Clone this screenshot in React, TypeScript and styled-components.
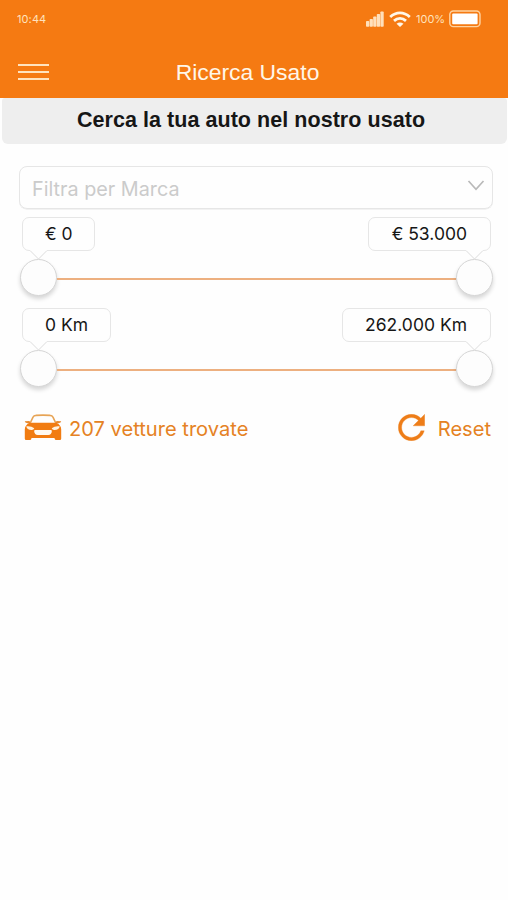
import React from "react";
import styled, { createGlobalStyle } from "styled-components";

const Global = createGlobalStyle`
  *, *::before, *::after { box-sizing: border-box; }
  html, body { margin: 0; padding: 0; background: #fefefe; }
  button { font: inherit; color: inherit; background: none; border: 0; padding: 0; margin: 0; }
  svg { display: block; flex: none; }
`;

const Screen = styled.div`
  display: flex;
  flex-direction: column;
  width: 508px;
  height: 900px;
  overflow: hidden;
  background: #fefefe;
  font-family: Inter, "Liberation Sans", sans-serif;
`;

const Header = styled.header`
  flex: none;
  height: 98px;
  background: #f57a12;
  color: #fff6e8;
`;

const StatusBar = styled.div`
  display: flex;
  align-items: center;
  justify-content: space-between;
  height: 38px;
  padding: 0 27px 0 17px;
`;

const Clock = styled.span`
  font-size: 11px;
  letter-spacing: 0.1px;
  color: #ffe2bd;
`;

const Indicators = styled.div`
  display: flex;
  align-items: center;
  gap: 5px;
`;

const Battery = styled.span`
  display: flex;
  align-items: center;
  justify-content: space-between;
  width: 65px;
  font-size: 11px;
  color: #ffe2bd;
`;

const NavBar = styled.div`
  display: grid;
  grid-template-columns: 60px 1fr 73px;
  align-items: center;
  height: 60px;
  padding-top: 7px;
`;

const MenuButton = styled.button`
  display: flex;
  flex-direction: column;
  gap: 5px;
  width: 31px;
  margin: 1px 0 0 18px;
`;

const MenuLine = styled.span`
  height: 2px;
  background: #ffe3be;
`;

const Title = styled.h1`
  margin: 0;
  text-align: center;
  font: 400 22.9px/26px "Liberation Sans", sans-serif;
`;

const Banner = styled.h2`
  flex: none;
  height: 46px;
  margin: 0 1px 0 2px;
  padding: 1px 7px 0 0;
  border-radius: 3px 3px 6px 6px;
  background: #eeeeee;
  color: #161616;
  text-align: center;
  font: 700 21.5px/43px "Liberation Sans", sans-serif;
  letter-spacing: 0.05px;
`;

const Filters = styled.main`
  display: flex;
  flex-direction: column;
  padding: 22px 14px 0 19px;
`;

const Select = styled.button`
  display: flex;
  align-items: center;
  justify-content: space-between;
  width: 474px;
  height: 43px;
  padding: 0 7px 0 12px;
  border: 1px solid #e6e6e6;
  border-radius: 8px;
  box-shadow: 0 0.5px 0 #e6e6e6;
  color: #cbcbcb;
  font-size: 19.8px;
`;

const Placeholder = styled.span`
  padding-top: 3px;
  line-height: 24px;
`;

const Chevron = styled.svg`
  margin-top: -4px;
`;

const Range = styled.section<{ $gap: number }>`
  margin-top: ${(p) => p.$gap}px;
  width: 474px;
`;

const Bubbles = styled.div`
  display: flex;
  justify-content: space-between;
  padding: 0 2px 0 3px;
`;

const Bubble = styled.output<{ $width: number; $side: "left" | "right" }>`
  position: relative;
  width: ${(p) => p.$width}px;
  height: 34px;
  padding: ${(p) => (p.$side === "left" ? "0 0 0 22px" : "0 23px 0 0")};
  text-align: ${(p) => p.$side};
  border: 1px solid #e6e6e6;
  border-radius: 7px;
  font-size: 17.5px;
  line-height: 32px;
  white-space: nowrap;
  color: #161616;
`;

const Pointer = styled.svg<{ $side: "left" | "right" }>`
  position: absolute;
  top: 32px;
  ${(p) => p.$side}: 7px;
`;

const Slider = styled.div`
  display: flex;
  align-items: center;
  height: 37px;
  margin-top: 8px;
  padding-left: 1px;
`;

const Knob = styled.span`
  flex: none;
  width: 37px;
  height: 37px;
  border: 1px solid #d6d6d6;
  border-radius: 50%;
  background: #fdfdfd;
  box-shadow: 0 3px 4px rgba(0, 0, 0, 0.16);
`;

const Track = styled.span`
  flex: 1;
  height: 2px;
  margin-top: 2px;
  background: #edb080;
`;

const Footer = styled.footer`
  display: flex;
  align-items: center;
  justify-content: space-between;
  width: 472px;
  height: 32px;
  margin-top: 25px;
  padding-left: 5px;
  color: #e58224;
  font-size: 20.1px;
`;

const Action = styled.div<{ $gap: number }>`
  display: flex;
  align-items: center;
  gap: ${(p) => p.$gap}px;
`;

const ActionLabel = styled.span`
  padding-top: 2px;
  line-height: 24px;
`;

const Lifted = styled.span`
  margin-top: -2px;
`;

const SignalIcon = () => (
  <svg width="18" height="16" viewBox="0 0 18 16" fill="#ffe0bb">
    <rect x="0" y="10" width="3.3" height="5.7" rx=".8" />
    <rect x="3.6" y="8" width="3.3" height="7.7" rx=".8" />
    <rect x="7.2" y="5.5" width="3.3" height="10.2" rx=".8" />
    <rect x="10.8" y="3" width="3.3" height="12.7" rx=".8" />
    <rect x="14.4" y="0.5" width="3.3" height="15.2" rx=".8" />
  </svg>
);

const WifiIcon = () => (
  <svg width="22" height="16" viewBox="0 0 22 16" fill="none" stroke="#fff7e8" strokeWidth="2.8">
    <path d="M1.2 5.9C7 .4 15 .4 20.8 5.9" />
    <path d="M5 9.9c3.6-3.2 8.4-3.2 12 0" />
    <path d="M11 16 7.5 12.7q3.5-2.6 7 0Z" fill="#fff7e8" stroke="none" />
  </svg>
);

const BatteryIcon = () => (
  <svg width="32" height="18" viewBox="0 0 32 18">
    <rect x=".8" y="1" width="30.2" height="15.6" rx="3.6" fill="none" stroke="#ffd3a0" strokeWidth="1.4" />
    <rect x="3.2" y="3.4" width="25.4" height="10.9" rx="1" fill="#fff" />
  </svg>
);

const CarIcon = () => (
  <svg width="38" height="27" viewBox="0 0 38 27">
    <path d="M6 9.5 9 3.2Q9.7 1.5 12 1.4q7-.5 14 0 2.300.1 3 1.800l3 6.300" fill="none" stroke="#e7a456" strokeWidth="1.6" />
    <path d="M.8 7.2 5.6 6.9 6.3 9.3Q1 9.500.8 7.200ZM37.200 7.200l-4.800-.3-.7 2.400q5.300.2 5.500-2.100Z" fill="#e88a2f" />
    <path d="M5.500 8.700h27q4.600 2.500 4.700 6.500v9.500q0 1.300-1.300 1.300h-3.800q-1.200 0-1.500-1.300v-.6H7.400v.6q-.3 1.300-1.500 1.300H2.100q-1.300 0-1.300-1.300v-9.500Q.9 11.200 5.500 8.700Z" fill="#f17c12" />
    <path d="M2.300 12.300q4.800-.6 8 2-.7 2-2.800 1.800-4.500 0-5.200-3.800ZM35.700 12.300q-4.800-.6-8 2 .7 2 2.800 1.800 4.500 0 5.200-3.800Z" fill="#fff2df" />
    <path d="M10.500 16.100h17q1 2-.7 3.900-.9 1-2.500 1H13.700q-1.600 0-2.500-1-1.700-1.900-.7-3.900Z" fill="#fffaf2" />
  </svg>
);

const ResetIcon = () => (
  <svg width="27" height="27" viewBox="3.8 3.8 16.4 16.4">
    <path
      d="M17.65 6.35C16.2 4.9 14.21 4 12 4c-4.42 0-7.99 3.58-7.99 8s3.57 8 7.99 8c3.73 0 6.84-2.55 7.73-6h-2.08c-.82 2.33-3.04 4-5.65 4-3.31 0-6-2.69-6-6s2.69-6 6-6c1.66 0 3.14.69 4.22 1.78L13 11h7V4l-2.35 2.35z"
      fill="#ee7d18"
      stroke="#ee7d18"
      strokeWidth=".2"
    />
  </svg>
);

type End = { text: string; width: number };

const PointerTip = ({ side }: { side: "left" | "right" }) => (
  <Pointer $side={side} width="17" height="10" viewBox="0 0 17 10">
    <path d="M0 0h17v1L8.5 9.3 0 1Z" fill="#fefefe" />
    <path d="M0 .5 8.5 9 17 .5" fill="none" stroke="#dcdcdc" />
  </Pointer>
);

const RangeFilter = ({ min, max, gap }: { min: End; max: End; gap: number }) => (
  <Range $gap={gap}>
    <Bubbles>
      <Bubble $width={min.width} $side="left">
        {min.text}
        <PointerTip side="left" />
      </Bubble>
      <Bubble $width={max.width} $side="right">
        {max.text}
        <PointerTip side="right" />
      </Bubble>
    </Bubbles>
    <Slider>
      <Knob />
      <Track />
      <Knob />
    </Slider>
  </Range>
);

export default function App() {
  return (
    <>
      <Global />
      <Screen>
        <Header>
          <StatusBar>
            <Clock>10:44</Clock>
            <Indicators>
              <SignalIcon />
              <WifiIcon />
              <Battery>
                100%
                <BatteryIcon />
              </Battery>
            </Indicators>
          </StatusBar>
          <NavBar>
            <MenuButton aria-label="Menu">
              <MenuLine />
              <MenuLine />
              <MenuLine />
            </MenuButton>
            <Title>Ricerca Usato</Title>
          </NavBar>
        </Header>
        <Banner>Cerca la tua auto nel nostro usato</Banner>
        <Filters>
          <Select>
            <Placeholder>Filtra per Marca</Placeholder>
            <Chevron width="18" height="11" viewBox="0 0 18 11" fill="none" stroke="#b9b9b9" strokeWidth="1.7">
              <path d="M1.5 1 9 9.2 16.5 1" />
            </Chevron>
          </Select>
          <RangeFilter gap={8} min={{ text: "€ 0", width: 73 }} max={{ text: "€ 53.000", width: 123 }} />
          <RangeFilter gap={12} min={{ text: "0 Km", width: 89 }} max={{ text: "262.000 Km", width: 149 }} />
          <Footer>
            <Action $gap={7}>
              <Lifted>
                <CarIcon />
              </Lifted>
              <ActionLabel>207 vetture trovate</ActionLabel>
            </Action>
            <Action $gap={13}>
              <Lifted>
                <ResetIcon />
              </Lifted>
              <ActionLabel>Reset</ActionLabel>
            </Action>
          </Footer>
        </Filters>
      </Screen>
    </>
  );
}
